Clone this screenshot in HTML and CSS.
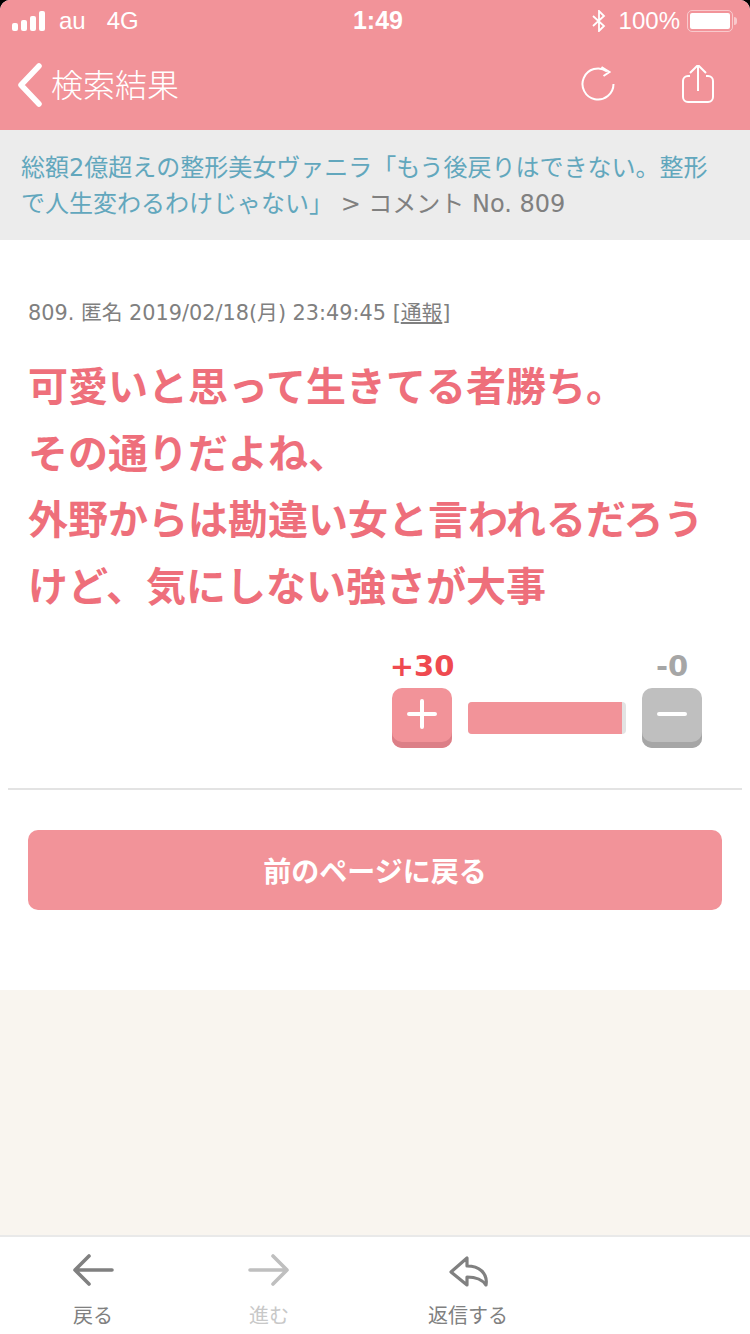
FILE: index.html
```html
<!DOCTYPE html>
<html lang="ja">
<head>
<meta charset="UTF-8">
<meta name="viewport" content="width=device-width, initial-scale=1.0">
<title>コメント No. 809</title>
<link rel="stylesheet" href="styles.css">
</head>
<body>
<div class="app">
  <header class="header">
    <div class="status">
      <div class="status-left">
        <span class="signal"><i class="s1"></i><i class="s2"></i><i class="s3"></i><i class="s4"></i></span>
        <span class="carrier">au</span>
        <span class="network">4G</span>
      </div>
      <div class="clock">1:49</div>
      <div class="status-right">
        <svg class="bt" width="16" height="22" viewBox="0 0 16 22"><path d="M2 6l11 10-5 5V1l5 5L2 16" fill="none" stroke="#fff" stroke-width="1.8"/></svg>
        <span class="pct">100%</span>
        <span class="battery"><span class="battery-fill"></span></span>
        <span class="battery-cap"></span>
      </div>
    </div>
    <nav class="nav">
      <div class="back">
        <svg width="28" height="44" viewBox="0 0 28 44"><path d="M25 3L7 22l18 19" fill="none" stroke="#fff" stroke-width="5.500" stroke-linecap="round" stroke-linejoin="round"/></svg>
        <span>検索結果</span>
      </div>
      <div class="nav-icons">
        <svg width="36" height="38" viewBox="0 0 36 38"><path d="M27 5.400A15.500 15.500 0 1 0 33.500 18" fill="none" stroke="#fff" stroke-width="2"/><path d="M21.500 1l8 5-6 4" fill="none" stroke="#fff" stroke-width="2"/></svg>
        <svg width="34" height="41" viewBox="0 2 34 41"><path d="M10 13H8a5 5 0 0 0-5 5v16a5 5 0 0 0 5 5h20a5 5 0 0 0 5-5V18a5 5 0 0 0-5-5h-2" fill="none" stroke="#fff" stroke-width="2"/><path d="M18 28V2M10 10l8-8 8 8" fill="none" stroke="#fff" stroke-width="2"/></svg>
      </div>
    </nav>
  </header>

  <div class="crumb"><a class="crumb-link">総額2億超えの整形美女ヴァニラ「もう後戻りはできない。整形</a><br><a class="crumb-link">で人生変わるわけじゃない」</a> &gt; コメント No. 809</div>

  <main class="content">
    <div class="meta">809. 匿名 2019/02/18(月) 23:49:45 [<u>通報</u>]</div>
    <p class="comment">可愛いと思って生きてる者勝ち。<br>その通りだよね、<br>外野からは勘違い女と言われるだろうけど、気にしない強さが大事</p>
    <div class="votes">
      <div class="vote">
        <div class="count count-plus">+30</div>
        <div class="vote-btn vote-plus"><svg width="30" height="30" viewBox="0 0 30 30"><path d="M15 2v26M2 15h26" stroke="#fff" stroke-width="4" stroke-linecap="round"/></svg></div>
      </div>
      <div class="bar"><div class="bar-fill"></div></div>
      <div class="vote">
        <div class="count count-minus">-0</div>
        <div class="vote-btn vote-minus"><svg width="30" height="30" viewBox="0 0 30 30"><path d="M2 15h26" stroke="#fff" stroke-width="4" stroke-linecap="round"/></svg></div>
      </div>
    </div>
    <hr class="rule">
    <a class="return">前のページに戻る</a>
  </main>

  <div class="spacer"></div>

  <footer class="tabs">
    <div class="tab tab-back">
      <svg width="42" height="34" viewBox="0 0 42 34"><path d="M40 17H3M17 3L3 17l14 14" fill="none" stroke="#808080" stroke-width="3.600" stroke-linecap="round" stroke-linejoin="round"/></svg>
      <span>戻る</span>
    </div>
    <div class="tab tab-forward">
      <svg width="42" height="34" viewBox="0 0 42 34"><path d="M2 17h37M25 3l14 14-14 14" fill="none" stroke="#bfbfbf" stroke-width="3.600" stroke-linecap="round" stroke-linejoin="round"/></svg>
      <span>進む</span>
    </div>
    <div class="tab tab-reply">
      <svg width="42" height="34" viewBox="0 0 42 34"><path d="M4 19L20 5v8c12 0 21 7 19 19-4-6-11-8-19-8v8z" fill="none" stroke="#808080" stroke-width="3.200" stroke-linejoin="round"/></svg>
      <span>返信する</span>
    </div>
  </footer>
</div>
</body>
</html>
```

FILE: styles.css
```css
* {
  box-sizing: border-box;
}

html, body {
  margin: 0;
  padding: 0;
  background: #000;
}

body {
  font-family: "DejaVu Sans", "Noto Sans CJK JP", sans-serif;
}

.app {
  width: 750px;
  height: 1334px;
  display: flex;
  flex-direction: column;
  border-radius: 10px 10px 0 0;
  overflow: hidden;
  background: #fff;
}

.header {
  height: 130px;
  background: #f29399;
  color: #fff;
}

.status {
  height: 41px;
  padding: 0 13px 0 12px;
  display: grid;
  grid-template-columns: 1fr auto 1fr;
  align-items: center;
}

.status-left {
  display: flex;
  align-items: center;
  font-family: "Liberation Sans", sans-serif;
  font-size: 24px;
}

.signal {
  display: flex;
  align-items: flex-end;
  gap: 3px;
  height: 20px;
  margin-right: 14px;
}

.signal i {
  width: 6px;
  background: #fff;
  border-radius: 2px;
}

.s1 { height: 8px; }
.s2 { height: 11px; }
.s3 { height: 15px; }
.s4 { height: 20px; }

.network {
  margin-left: 21px;
}

.clock {
  margin-left: 7px;
  font-family: "Liberation Sans", sans-serif;
  font-size: 25px;
  font-weight: bold;
}

.status-right {
  display: flex;
  align-items: center;
  justify-content: flex-end;
  font-family: "Liberation Sans", sans-serif;
  font-size: 24px;
}

.pct {
  margin-left: 12px;
  margin-right: 7px;
}

.battery {
  width: 46px;
  height: 22px;
  padding: 2px;
  border: 1.5px solid rgba(255, 255, 255, 0.5);
  border-radius: 5px;
  display: block;
}

.battery-fill {
  display: block;
  height: 100%;
  background: #fff;
  border-radius: 2px;
}

.battery-cap {
  width: 3px;
  height: 8px;
  margin-left: 1px;
  background: rgba(255, 255, 255, 0.5);
  border-radius: 0 3px 3px 0;
}

.nav {
  height: 89px;
  padding: 0 36px 1px 14px;
  display: flex;
  align-items: center;
  justify-content: space-between;
}

.back {
  display: flex;
  align-items: center;
  font-family: "Noto Sans CJK JP", sans-serif;
  font-weight: 300;
  font-size: 32px;
}

.back span {
  margin-left: 9px;
  padding-bottom: 4px;
}

.nav-icons {
  display: flex;
  align-items: center;
  gap: 64px;
}

.crumb {
  height: 110px;
  padding: 20px 20px 0 21px;
  background: #ececec;
  color: #808080;
  font-size: 24px;
  line-height: 36px;
  white-space: nowrap;
}

.crumb-link {
  color: #62a7bd;
}

.content {
  height: 750px;
  padding: 0 8px;
  background: #fff;
}

.meta {
  margin: 60px 20px 0;
  color: #808080;
  font-size: 20.8px;
  line-height: 26px;
}

.comment {
  margin: 28px 20px 0;
  color: #ee6f7b;
  font-size: 40px;
  font-weight: bold;
  line-height: 66.5px;
}

.votes {
  margin: 24px 40px 0 20px;
  display: flex;
  justify-content: flex-end;
  align-items: flex-end;
}

.vote {
  width: 60px;
  display: flex;
  flex-direction: column;
  align-items: center;
}

.count {
  font-size: 29px;
  font-weight: bold;
  line-height: 44px;
}

.count-plus {
  color: #ef4a50;
}

.count-minus {
  color: #a6a6a6;
}

.vote-btn {
  width: 60px;
  height: 60px;
  border-radius: 10px;
  display: flex;
  align-items: center;
  justify-content: center;
  padding-bottom: 8px;
}

.vote-plus {
  background: #f29399;
  box-shadow: inset 0 -6px 0 #dc7f87;
}

.vote-minus {
  background: #bfbfbf;
  box-shadow: inset 0 -6px 0 #a6a6a6;
}

.bar {
  width: 158px;
  height: 32px;
  margin: 0 16px 14px;
  background: #e3e3e3;
  border-radius: 4px;
  overflow: hidden;
}

.bar-fill {
  width: 154px;
  height: 100%;
  background: #f29399;
}

.rule {
  margin: 40px 0 0;
  border: 0;
  border-top: 2px solid #e3e3e3;
}

.return {
  display: block;
  margin: 40px 20px 0;
  height: 80px;
  background: #f29399;
  border-radius: 10px;
  color: #fff;
  font-size: 28px;
  font-weight: bold;
  line-height: 85px;
  text-align: center;
}

.spacer {
  flex: 1;
  background: #f9f5ef;
}

.tabs {
  height: 99px;
  display: flex;
  background: #fff;
  border-top: 2px solid #e9e9e9;
}

.tab {
  display: flex;
  flex-direction: column;
  align-items: center;
  padding-top: 16px;
  color: #808080;
  font-size: 20px;
}

.tab span {
  margin-top: 14px;
  line-height: 30px;
}

.tab-back {
  width: 186px;
}

.tab-forward {
  width: 166px;
  color: #c8c8c8;
}

.tab-reply {
  width: 232px;
}
```
